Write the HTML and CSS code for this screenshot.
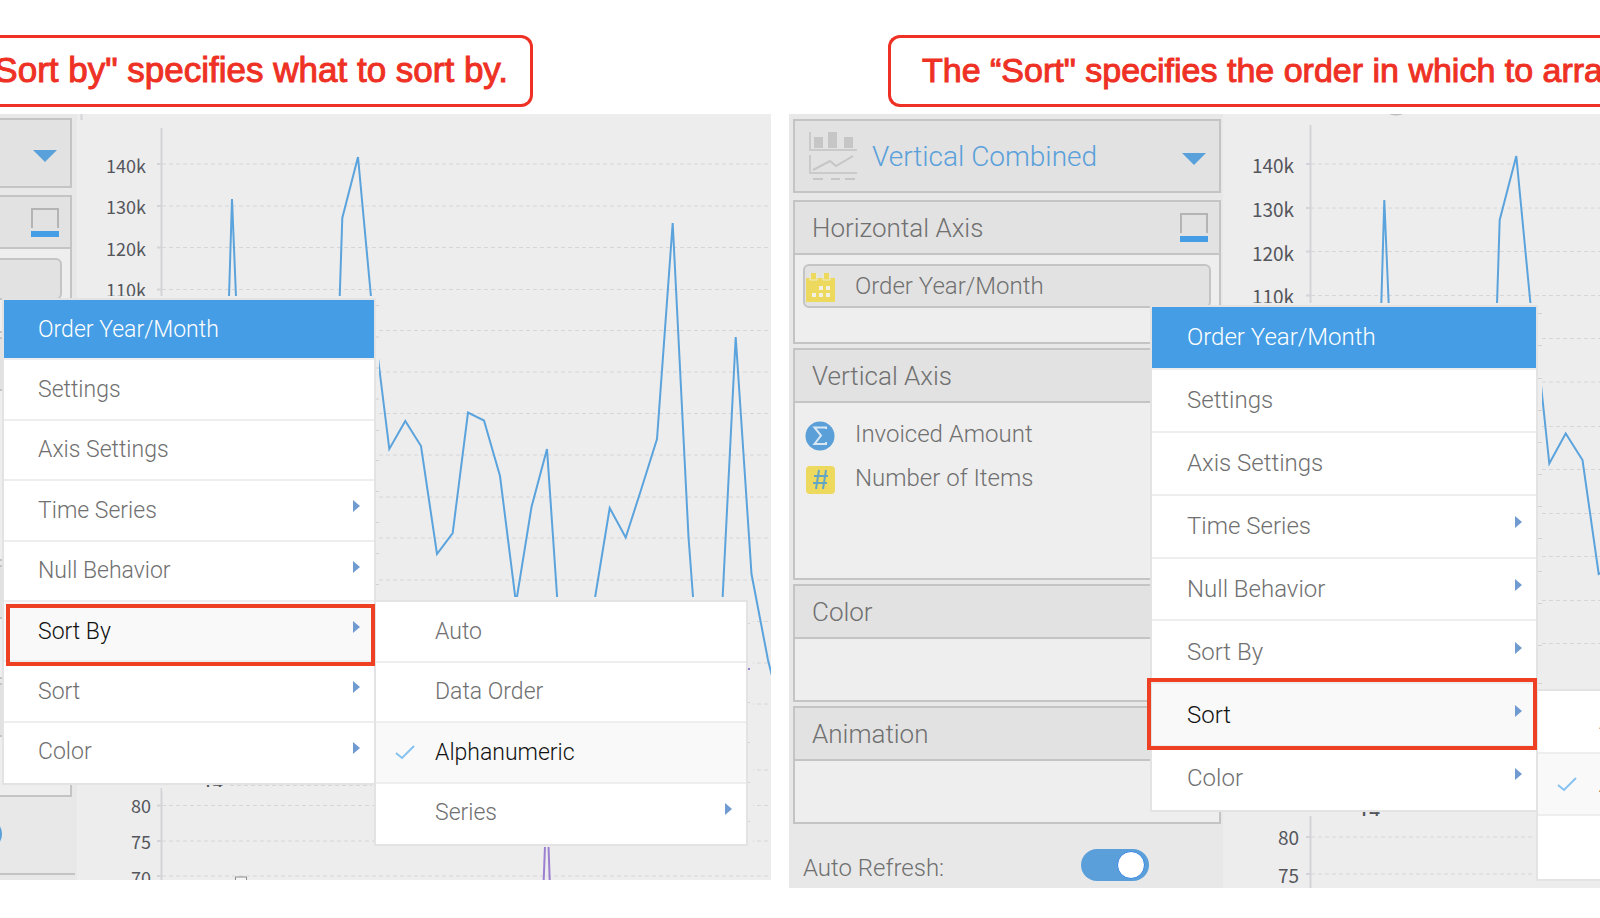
FILE: index.html
```html
<!DOCTYPE html>
<html lang="en">
<head>
    <meta charset="UTF-8">
    <meta name="viewport" content="width=device-width, initial-scale=1.0">
    <title>Sort By and Sort</title>
    <link rel="stylesheet" href="styles.css">
</head>
<body>
    <!-- Shared icons -->
    <svg class="sprite" width="0" height="0" aria-hidden="true">
        <symbol id="caret" viewBox="0 0 7 20"><path d="M0 0L7 6L0 12Z" fill="#6f9bd0"/></symbol>
        <symbol id="check" viewBox="0 0 20 16"><path d="M1 9L7 14L19 2" fill="none" stroke="#85c2f0" stroke-width="2"/></symbol>
        <symbol id="drop" viewBox="0 0 24 18"><path d="M0 6H24L12 18Z" fill="#5aa0da"/></symbol>
        <symbol id="axis" viewBox="0 0 28 29">
            <path d="M1 20V1H27V20" fill="none" stroke="#b4b4b4" stroke-width="2"/>
            <rect y="23" width="28" height="6" fill="#449de5"/>
        </symbol>
    </svg>

    <main class="page">
        <!-- Sort By -->
        <section class="column column-left">
            <p class="callout">Sort by" specifies what to sort by.</p>
            <div class="screen">
                <aside class="sidebar">
                    <button class="chart-type" aria-label="Chart type">
                        <svg class="drop"><use href="#drop"/></svg>
                    </button>
                    <div class="panel">
                        <div class="panel-head"><svg class="axis"><use href="#axis"/></svg></div>
                        <div class="panel-body fields"><div class="field selected"></div></div>
                    </div>
                    <div class="panel">
                        <div class="panel-head"></div>
                        <div class="panel-body tall"></div>
                    </div>
                    <div class="panel">
                        <div class="panel-head"></div>
                        <div class="panel-body"></div>
                    </div>
                    <div class="panel">
                        <div class="panel-head"></div>
                        <div class="panel-body"></div>
                    </div>
                    <div class="refresh"><input class="toggle" type="checkbox" aria-label="Auto Refresh" checked></div>
                </aside>
                <div class="chart">
                    <svg viewBox="77 114 694 766">
                        <g class="grid">
                            <path d="M162 164H771M162 206H771M162 247.500H771M162 289.500H771M162 330.500H771M162 372H771M162 413.500H771M162 455H771M162 497H771M162 538H771M162 580H771M162 621.500H771M162 663H771M162 704H771M162 770H771M162 805.500H771M162 841H771M162 876H771"/>
                        </g>
                        <path class="axis-line" d="M161.500 128V880M157 164H161M157 206H161M157 247.500H161M157 289.500H161M157 805.500H161M157 841H161M157 876H161M81.500 114V120"/>
                        <g class="labels">
                            <text x="146" y="173">140k</text>
                            <text x="146" y="214">130k</text>
                            <text x="146" y="256">120k</text>
                            <text x="146" y="297">110k</text>
                            <text x="151" y="813">80</text>
                            <text x="151" y="849">75</text>
                            <text x="151" y="885">70</text>
                        </g>
                        <path class="series" d="M229 297L232 199L236 297M339.700 297L342.300 218L358 157L371 297M378 358L389.300 449L405.300 421L421 446L437 554L452.700 533L468 412.500L484 420.500L500 476L516 603L531.500 507L547 449L558 610M593 610L609.700 508L625.700 537.500L641 490L657 439L672.700 223L688.500 537L694 610M722 610L735.700 337L751.500 574L768 660L772 676"/>
                        <path class="series purple" d="M543.700 880L545 846M549.700 880L548.500 846"/>
                        <!-- strips behind the menus -->
                        <path class="cover" d="M77 296H374V787H77ZM372 300H379V600H372ZM374 597H748V847H374ZM746 600H753V845H746Z"/>
                        <path class="series purple" d="M747 669H750"/>
                        <g class="labels"><text class="cut" x="223" y="789">14</text></g>
                        <path class="cover" d="M77 787H374V791H162V788H77Z"/>
                        <path class="grid" d="M230 785.500H372"/>
                        <path class="ticks" d="M375 305.500H379M375 337H379M375 368H379M375 399H379M375 430.500H379M375 460.500H379M375 491.500H379M375 522.500H379M375 553.500H379M375 584.500H379M747 623.500H750M747 702.500H750M747 742.500H750M747 782.500H750M747 821.500H750"/>
                        <path class="handle" d="M235.500 880V877H246.500V880"/>
                    </svg>
                </div>

                <ul class="menu menu-main">
                    <li class="menu-title">Order Year/Month</li>
                    <li><button>Settings</button></li>
                    <li><button>Axis Settings</button></li>
                    <li><button>Time Series<svg class="caret"><use href="#caret"/></svg></button></li>
                    <li><button>Null Behavior<svg class="caret"><use href="#caret"/></svg></button></li>
                    <li class="active marked"><button>Sort By<svg class="caret"><use href="#caret"/></svg></button></li>
                    <li><button>Sort<svg class="caret"><use href="#caret"/></svg></button></li>
                    <li><button>Color<svg class="caret"><use href="#caret"/></svg></button></li>
                </ul>
                <ul class="menu submenu">
                    <li><button>Auto</button></li>
                    <li><button>Data Order</button></li>
                    <li class="active"><button><svg class="check"><use href="#check"/></svg>Alphanumeric</button></li>
                    <li><button>Series<svg class="caret"><use href="#caret"/></svg></button></li>
                </ul>
            </div>
        </section>

        <!-- Sort -->
        <section class="column column-right">
            <p class="callout">The “Sort" specifies the order in which to arrange</p>
            <div class="screen">
                <aside class="sidebar">
                    <button class="chart-type">
                        <svg class="combined" viewBox="0 0 48 48">
                            <path d="M1 0V18H48M1 23V41H48" fill="none" stroke="#cacaca" stroke-width="2"/>
                            <path d="M5 5H14V16H5ZM19 0H28V16H19ZM35 5H44V16H35Z" fill="#c6c6c6"/>
                            <path d="M4 38L21 29L27 34L44 24M4 47H14M22 47H31M36 47H46" fill="none" stroke="#c6c6c6" stroke-width="2"/>
                        </svg>
                        <span>Vertical Combined</span>
                        <svg class="drop"><use href="#drop"/></svg>
                    </button>
                    <div class="panel">
                        <div class="panel-head">Horizontal Axis<svg class="axis"><use href="#axis"/></svg></div>
                        <div class="panel-body fields">
                            <div class="field selected">
                                <svg class="field-icon" viewBox="0 0 29 29">
                                    <path d="M0 5H5V0H10V5H18V0H23V5H29V29H0Z" fill="#ecd95e"/>
                                    <path d="M4 0V7H11V0M17 0V7H24V0" fill="none" stroke="#f0eccb" stroke-width="1"/>
                                    <path d="M13 13H17V17H13ZM20 13H24V17H20ZM6 20H10V24H6ZM13 20H17V24H13ZM20 20H24V24H20Z" fill="#f1f0e4"/>
                                </svg>
                                Order Year/Month
                            </div>
                        </div>
                    </div>
                    <div class="panel">
                        <div class="panel-head">Vertical Axis</div>
                        <div class="panel-body fields tall">
                            <div class="field">
                                <svg class="field-icon" viewBox="0 0 29 29">
                                    <circle cx="14" cy="15" r="14.500" fill="#5a9fd8"/>
                                    <path d="M20 8V6.500H8.500L15 14.500L8.500 23H20V21" fill="none" stroke="#d9e7f2" stroke-width="2"/>
                                </svg>
                                Invoiced Amount
                            </div>
                            <div class="field">
                                <svg class="field-icon" viewBox="0 0 29 29">
                                    <rect y="1" width="29" height="28" rx="4" fill="#ecd95e"/>
                                    <path d="M13 5L10 24M20 5L17 24M8 11H22M7 18H21" fill="none" stroke="#62a5c4" stroke-width="2"/>
                                </svg>
                                Number of Items
                            </div>
                        </div>
                    </div>
                    <div class="panel">
                        <div class="panel-head">Color</div>
                        <div class="panel-body"></div>
                    </div>
                    <div class="panel">
                        <div class="panel-head">Animation</div>
                        <div class="panel-body"></div>
                    </div>
                    <div class="refresh">
                        <label for="refresh">Auto Refresh:</label>
                        <input class="toggle" type="checkbox" id="refresh" checked>
                    </div>
                </aside>
                <div class="chart">
                    <svg viewBox="1223 114 377 774">
                        <g class="grid">
                            <path d="M1311 164H1600M1311 208H1600M1311 251.500H1600M1311 295.500H1600M1311 338.500H1600M1311 382H1600M1311 426.500H1600M1311 469.500H1600M1311 513.500H1600M1311 556.500H1600M1311 600.500H1600M1311 643.500H1600M1311 837H1534M1311 874H1534"/>
                        </g>
                        <path class="axis-line" d="M1310.500 125V888M1306 164H1310M1306 208H1310M1306 251.500H1310M1306 295.500H1310M1306 837H1310M1306 874H1310"/>
                        <g class="labels">
                            <text x="1294" y="173">140k</text>
                            <text x="1294" y="217">130k</text>
                            <text x="1294" y="261">120k</text>
                            <text x="1294" y="304">110k</text>
                            <text x="1299" y="845">80</text>
                            <text x="1299" y="883">75</text>
                        </g>
                        <ellipse cx="1396" cy="113" rx="7" ry="2.500" fill="#bdbdbd"/>
                        <path class="series" d="M1381.300 304L1384.300 200L1388.700 304M1497 304L1499.700 220L1516.300 156L1530.500 304M1541 385L1549.300 463.500L1565.700 433.500L1582.500 460L1598.700 574L1601 573"/>
                        <!-- strips behind the menus -->
                        <path class="cover" d="M1223 303H1536V816H1223ZM1534 310H1542V690H1534Z"/>
                        <g class="labels"><text class="cut" x="1380" y="818">14</text></g>
                        <path class="cover" d="M1340 816H1388V820H1340Z"/>
                        <path class="grid" d="M1389 811.500H1533"/>
                        <path class="ticks" d="M1538 313.500H1542M1538 345.500H1542M1538 378.500H1542M1538 410.500H1542M1538 442.500H1542M1538 474.500H1542M1538 506.500H1542M1538 538.500H1542M1538 571.500H1542M1538 603.500H1542M1538 645.500H1542M1538 683.500H1542"/>
                    </svg>
                </div>

                <ul class="menu menu-main">
                    <li class="menu-title">Order Year/Month</li>
                    <li><button>Settings</button></li>
                    <li><button>Axis Settings</button></li>
                    <li><button>Time Series<svg class="caret"><use href="#caret"/></svg></button></li>
                    <li><button>Null Behavior<svg class="caret"><use href="#caret"/></svg></button></li>
                    <li><button>Sort By<svg class="caret"><use href="#caret"/></svg></button></li>
                    <li class="active marked"><button>Sort<svg class="caret"><use href="#caret"/></svg></button></li>
                    <li><button>Color<svg class="caret"><use href="#caret"/></svg></button></li>
                </ul>
                <ul class="menu submenu">
                    <li><button>Auto</button></li>
                    <li class="active"><button><svg class="check"><use href="#check"/></svg>Ascending</button></li>
                    <li><button>Descending</button></li>
                </ul>
            </div>
        </section>
    </main>
</body>
</html>
```
FILE: styles.css
```css
/* General Styles */
* {
    box-sizing: border-box;
}
body {
    margin: 0;
    background-color: #ffffff;
    color: #707070;
    font-family: Roboto, sans-serif;
    font-weight: 300;
    overflow-x: hidden;
}
button {
    font: inherit;
    color: inherit;
    border: none;
    background: none;
    text-align: left;
    cursor: pointer;
}
.sprite {
    position: absolute;
}
.page {
    display: grid;
    grid-template-columns: 771fr 811fr;
    column-gap: 18px;
    padding-top: 35px;
    overflow: hidden;
}
.column {
    min-width: 0;
}
.column-left {
    --row-text: 23px;
    --row-indent: 34px;
    --label-text: 18px;
    --type-height: 70px;
    --head-height: 52px;
    --body-height: 58px;
    --fields-height: 82px;
    --tall-height: 168px;
    --field-height: 42px;
}
.column-right {
    --row-text: 24px;
    --row-indent: 35px;
    --label-text: 19px;
    --type-height: 74px;
    --head-height: 53px;
    --body-height: 61px;
    --fields-height: 87px;
    --tall-height: 175px;
    --field-height: 44px;
}

/* Red notes above each screen */
.callout {
    display: flex;
    align-items: center;
    height: 72px;
    margin: 0 0 7px;
    padding-bottom: 3px;
    border: 3px solid #ee3124;
    color: #ee3124;
    font-family: "Liberation Sans", Arial, sans-serif;
    font-size: 34px;
    font-weight: 400;
    line-height: 40px;
    white-space: nowrap;
    -webkit-text-stroke: 1px #ee3124;
}
.column-left .callout {
    justify-content: flex-end;
    width: 533px;
    padding-right: 22px;
    border-left: none;
    border-radius: 0 12px 12px 0;
    font-size: 35px;
}
.column-right .callout {
    margin-left: 99px;
    padding-left: 31px;
    border-right: none;
    border-radius: 12px 0 0 12px;
    overflow: hidden;
}

.screen {
    position: relative;
    display: flex;
    background-color: #ededed;
}

/* Sidebar */
.sidebar {
    flex: none;
    background-color: #e8e8e8;
    overflow: hidden;
}
.column-left .sidebar {
    width: 77px;
    padding: 4px 5px 0 0;
}
.column-right .sidebar {
    width: 434px;
    padding: 5px 2px 0 4px;
}
.chart-type {
    display: flex;
    align-items: center;
    width: 100%;
    height: var(--type-height);
    margin-bottom: 7px;
    padding: 0 13px 0 14px;
    border: 2px solid #c4c4c4;
    background-color: #e2e2e2;
    color: #5aa0da;
    font-size: 28px;
}
.combined {
    width: 48px;
    height: 48px;
    margin-right: 15px;
}
.drop {
    width: 24px;
    height: 18px;
    margin-left: auto;
}
.panel {
    margin-bottom: 4px;
    border: 2px solid #c4c4c4;
    background-color: #eeeeee;
}
.column-left .chart-type,
.column-left .panel {
    border-left: none;
}
.panel-head {
    display: flex;
    align-items: center;
    height: var(--head-height);
    padding: 0 11px 0 17px;
    border-bottom: 2px solid #c4c4c4;
    background-color: #e2e2e2;
    font-size: 26px;
}
.axis {
    width: 28px;
    height: 29px;
    margin-left: auto;
}
.panel-body {
    height: var(--body-height);
}
.fields {
    height: var(--fields-height);
    padding: 9px 8px;
}
.tall {
    height: var(--tall-height);
}
.field {
    display: flex;
    align-items: center;
    height: var(--field-height);
    padding-left: 1px;
    border: 2px solid transparent;
    border-radius: 6px;
    font-size: 24px;
}
.field.selected {
    border-color: #c4c4c4;
    background-color: #e2e2e2;
}
.column-left .field {
    margin-left: -16px;
}
.field-icon {
    width: 29px;
    height: 29px;
    margin: 3px 20px 0 0;
    overflow: visible;
}
.refresh {
    display: flex;
    align-items: center;
    justify-content: space-between;
    height: 60px;
    padding: 20px 72px 0 10px;
    font-size: 24px;
}
.toggle {
    appearance: none;
    flex: none;
    display: flex;
    align-items: center;
    justify-content: flex-end;
    width: 68px;
    height: 32px;
    margin: 0 0 6px;
    padding-right: 4px;
    border-radius: 16px;
    background-color: #5a9fda;
}
.toggle::after {
    content: "";
    width: 26px;
    height: 26px;
    border: 1px solid #3584e4;
    border-radius: 50%;
    background-color: #ffffff;
}
.column-left .refresh {
    height: 74px;
    margin-right: -3px;
    padding: 0;
    border-bottom: 2px solid #c4c4c4;
}
.column-left .toggle {
    margin-left: -66px;
}

/* Charts */
.chart {
    flex: 1;
    min-width: 0;
}
.chart svg {
    display: block;
    width: 100%;
}
.grid {
    fill: none;
    stroke: #d6d6d9;
    stroke-width: 1;
    stroke-dasharray: 4 3;
}
.axis-line {
    fill: none;
    stroke: #d3d3da;
    stroke-width: 2;
}
.labels {
    fill: #54565c;
    font-family: "Noto Sans CJK JP", sans-serif;
    font-weight: 400;
    font-size: var(--label-text);
    text-anchor: end;
}
.labels .cut {
    font-weight: 500;
}
.series {
    fill: none;
    stroke: #5ba3dc;
    stroke-width: 2;
}
.purple {
    stroke: #9b7fd1;
}
.ticks {
    stroke: #d2d2d4;
    stroke-width: 1;
}
.cover {
    fill: #ededed;
}
.handle {
    fill: #f6f6f6;
    stroke: #8a8a8a;
    stroke-width: 1;
}

/* Menus over the screens */
.menu {
    position: absolute;
    display: grid;
    grid-auto-rows: 1fr;
    margin: 0;
    padding: 0;
    background-color: #ffffff;
    box-shadow: 0 0 0 2px #e3e3e3;
    font-size: var(--row-text);
    list-style: none;
}
.menu li {
    position: relative;
    display: flex;
    border-bottom: 2px solid #eeeeee;
}
.menu li:last-child {
    border-bottom-color: transparent;
}
.menu button,
.menu-title {
    display: flex;
    align-items: center;
    width: 100%;
    padding: 0 14px 0 var(--row-indent);
    white-space: nowrap;
}
.menu .menu-title {
    background-color: #449de5;
    color: #ffffff;
}
.menu .active {
    background-color: #f9f9f9;
    color: #111111;
}
.marked::after {
    content: "";
    position: absolute;
    border: 4px solid #ee4023;
    z-index: 2;
}
.caret {
    width: 7px;
    height: 20px;
    margin-left: auto;
}
.check {
    width: 20px;
    height: 16px;
    margin-right: 20px;
}
.submenu button {
    padding-left: 59px;
}
.submenu .active button {
    padding-left: 19px;
}
.column-left .menu-main {
    top: 186px;
    left: 4px;
    width: 370px;
    height: 483px;
    z-index: 1;
}
.column-left .marked::after {
    inset: 2px -1px -6px 2px;
}
.column-left .submenu {
    top: 488px;
    left: 376px;
    width: 370px;
    height: 242px;
}
.column-right .menu-main {
    top: 193px;
    left: 363px;
    width: 384px;
    height: 503px;
    z-index: 1;
}
.column-right .marked::after {
    inset: -6px -1px -5px -5px;
}
.column-right .submenu {
    top: 577px;
    left: 749px;
    right: 0;
    height: 188px;
    overflow: hidden;
}
.column-right .submenu button {
    padding-left: 61px;
}
.column-right .submenu .active button {
    padding-left: 19px;
}
.column-right .check {
    margin-right: 22px;
}
```
